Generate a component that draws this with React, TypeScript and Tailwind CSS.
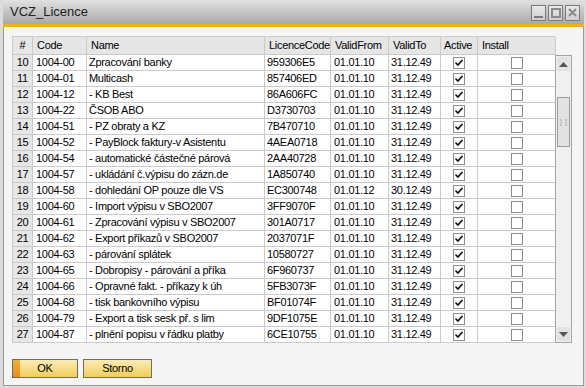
import React from 'react';

const rows = [
  ['10', '1004-00', 'Zpracování banky', '959306E5', '01.01.10', '31.12.49'],
  ['11', '1004-01', 'Multicash', '857406ED', '01.01.10', '31.12.49'],
  ['12', '1004-12', '- KB Best', '86A606FC', '01.01.10', '31.12.49'],
  ['13', '1004-22', 'ČSOB ABO', 'D3730703', '01.01.10', '31.12.49'],
  ['14', '1004-51', '- PZ obraty a KZ', '7B470710', '01.01.10', '31.12.49'],
  ['15', '1004-52', '- PayBlock faktury-v Asistentu', '4AEA0718', '01.01.10', '31.12.49'],
  ['16', '1004-54', '- automatické částečné párová', '2AA40728', '01.01.10', '31.12.49'],
  ['17', '1004-57', '- ukládání č.výpisu do zázn.de', '1A850740', '01.01.10', '31.12.49'],
  ['18', '1004-58', '- dohledání OP pouze dle VS', 'EC300748', '01.01.12', '30.12.49'],
  ['19', '1004-60', '- Import výpisu v SBO2007', '3FF9070F', '01.01.10', '31.12.49'],
  ['20', '1004-61', '- Zpracování výpisu v SBO2007', '301A0717', '01.01.10', '31.12.49'],
  ['21', '1004-62', '- Export příkazů v SBO2007', '2037071F', '01.01.10', '31.12.49'],
  ['22', '1004-63', '- párování splátek', '10580727', '01.01.10', '31.12.49'],
  ['23', '1004-65', '- Dobropisy - párování a příka', '6F960737', '01.01.10', '31.12.49'],
  ['24', '1004-66', '- Opravné fakt. - příkazy k úh', '5FB3073F', '01.01.10', '31.12.49'],
  ['25', '1004-68', '- tisk bankovního výpisu', 'BF01074F', '01.01.10', '31.12.49'],
  ['26', '1004-79', '- Export a tisk sesk př. s lim', '9DF1075E', '01.01.10', '31.12.49'],
  ['27', '1004-87', '- plnění popisu v řádku platby', '6CE10755', '01.01.10', '31.12.49'],
];

const cols = 'grid grid-cols-[20px_54px_178px_66px_58px_52px_37px_78px]';

function Check({ checked }: { checked?: boolean }) {
  return (
    <div className="w-[12px] h-[12px] border border-[#8c8c8c] bg-white flex items-center justify-center">
      {checked && (
        <svg width="8" height="7" viewBox="0 0 8 7">
          <path d="M0.5 3.5 L3 6 L7.5 0.8" fill="none" stroke="#111" strokeWidth="1.6" />
        </svg>
      )}
    </div>
  );
}

function WinButton({ children }: { children: React.ReactNode }) {
  return (
    <div className="w-[15px] h-[16px] border border-[#7c7c7c] bg-gradient-to-b from-[#e8e8e8] to-[#cfcfcf] flex items-center justify-center">
      {children}
    </div>
  );
}

export default function App() {
  const cell = 'border-r border-b border-[#cacaca] flex items-center whitespace-nowrap overflow-hidden';
  return (
    <div
      className="w-[586px] h-[388px] bg-[#dcdcdc] pl-[3px] pr-[2px] pb-[2px] flex flex-col text-[11px] tracking-[-0.3px] text-black"
      style={{ fontFamily: '"Liberation Sans", Arial, sans-serif' }}
    >
      {/* title bar */}
      <div className="h-[24px] shrink-0 bg-gradient-to-b from-[#e2e2e2] to-[#a9a9a9] flex items-center pl-[7px] pr-[4px]">
        <span className="text-[13px] tracking-normal text-[#222]">VCZ_Licence</span>
        <div className="ml-auto flex gap-[2px] mt-[1px]">
          <WinButton>
            <div className="w-[9px] h-[2px] bg-[#7a7a7a] mt-[8px]" />
          </WinButton>
          <WinButton>
            <div className="w-[10px] h-[10px] border-2 border-[#8a8a8a]" />
          </WinButton>
          <WinButton>
            <svg width="9" height="9" viewBox="0 0 9 9">
              <path d="M1 1 L8 8 M8 1 L1 8" stroke="#8a8a8a" strokeWidth="2" />
            </svg>
          </WinButton>
        </div>
      </div>
      <div className="h-[3px] shrink-0 bg-[#f4b01c]" />

      {/* body */}
      <div className="flex-1 bg-[#f5f5f5] border-l border-r border-b border-[#9a9a9a] pl-[8px] pt-[9px] flex flex-col">
        <div className="w-[560px]">
          {/* header */}
          <div className={`${cols} w-[543px] h-[19px] bg-[#e6e6e6] border-t border-l border-[#cacaca]`}>
            <div className={`${cell} justify-center`}>#</div>
            <div className={`${cell} pl-[4px]`}>Code</div>
            <div className={`${cell} pl-[4px]`}>Name</div>
            <div className={`${cell} pl-[4px]`}>LicenceCode</div>
            <div className={`${cell} pl-[4px]`}>ValidFrom</div>
            <div className={`${cell} pl-[4px]`}>ValidTo</div>
            <div className={`${cell} pl-[3px]`}>Active</div>
            <div className={`${cell} pl-[4px]`}>Install</div>
          </div>
          <div className="flex">
            <div className="w-[543px] border-l border-[#cacaca]">
              {rows.map((r) => (
                <div key={r[0]} className={`${cols} h-[16px]`}>
                  <div className={`${cell} justify-center bg-[#e6e6e6]`}>{r[0]}</div>
                  <div className={`${cell} bg-white pl-[3px]`}>{r[1]}</div>
                  <div className={`${cell} bg-white pl-[2px]`}>{r[2]}</div>
                  <div className={`${cell} bg-white pl-[2px]`}>{r[3]}</div>
                  <div className={`${cell} bg-white pl-[3px]`}>{r[4]}</div>
                  <div className={`${cell} bg-white pl-[2px]`}>{r[5]}</div>
                  <div className={`${cell} bg-white justify-center`}>
                    <Check checked />
                  </div>
                  <div className={`${cell} bg-white justify-center`}>
                    <Check />
                  </div>
                </div>
              ))}
            </div>
            {/* scrollbar */}
            <div className="w-[17px] border border-[#a4a4a4] bg-[#f0f0f0] flex flex-col p-px">
              <div className="h-[14px] bg-[#e2e2e2] flex items-center justify-center">
                <svg width="9" height="5" viewBox="0 0 9 5">
                  <path d="M0 5 L4.5 0 L9 5 Z" fill="#555" />
                </svg>
              </div>
              <div className="mt-[26px] h-[50px] border border-[#9c9c9c] bg-[#e2e2e2] flex items-center justify-center">
                <svg width="7" height="7" viewBox="0 0 7 7">
                  <rect x="0" y="0" width="2" height="2" fill="#c2c2c2" />
                  <rect x="5" y="0" width="2" height="2" fill="#c2c2c2" />
                  <rect x="0" y="2.5" width="2" height="2" fill="#c2c2c2" />
                  <rect x="5" y="2.5" width="2" height="2" fill="#c2c2c2" />
                  <rect x="0" y="5" width="2" height="2" fill="#c2c2c2" />
                  <rect x="5" y="5" width="2" height="2" fill="#c2c2c2" />
                </svg>
              </div>
              <div className="mt-auto h-[14px] bg-[#e2e2e2] flex items-center justify-center">
                <svg width="9" height="5" viewBox="0 0 9 5">
                  <path d="M0 0 L9 0 L4.5 5 Z" fill="#555" />
                </svg>
              </div>
            </div>
          </div>
        </div>

        {/* buttons */}
        <div className="mt-[16px] flex gap-[5px]">
          <button className="w-[66px] h-[19px] border border-[#6c6c6c] bg-gradient-to-b from-[#fbecb4] to-[#f2cd58] flex items-stretch p-0">
            <div className="w-[7px] bg-gradient-to-b from-[#f5b033] to-[#e88c14]" />
            <span className="flex-1 flex items-center justify-center pr-[7px]">OK</span>
          </button>
          <button className="w-[69px] h-[19px] border border-[#6c6c6c] bg-gradient-to-b from-[#fbecb4] to-[#f2cd58] flex items-center justify-center">
            Storno
          </button>
        </div>
      </div>
    </div>
  );
}
